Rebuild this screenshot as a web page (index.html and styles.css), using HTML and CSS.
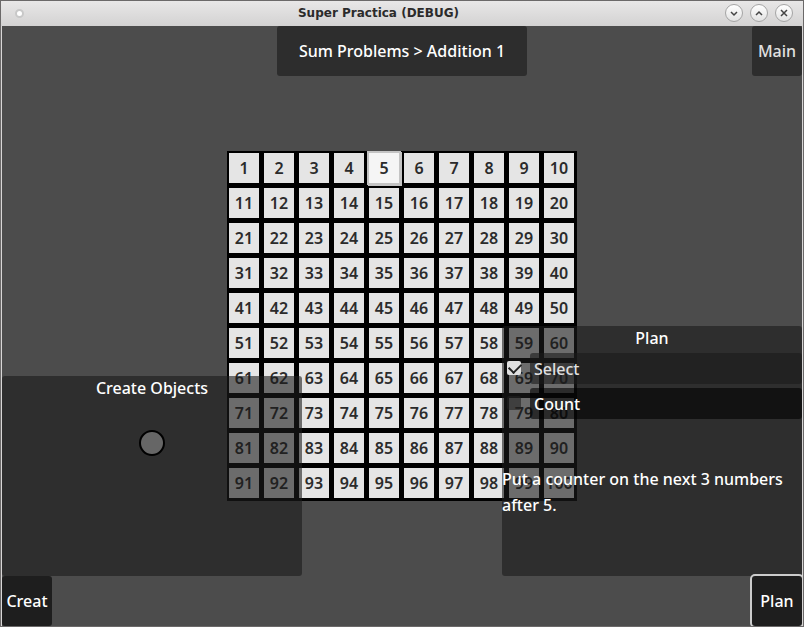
FILE: index.html
```html
<!DOCTYPE html>
<html lang="en">
<head>
<meta charset="utf-8">
<title>Super Practica (DEBUG)</title>
<link rel="stylesheet" href="styles.css">
</head>
<body>
<div class="window">
  <header class="titlebar">
    <span class="window-dot"></span>
    <h1 class="window-title">Super Practica (DEBUG)</h1>
    <div class="window-controls">
      <button class="window-button" aria-label="Minimize"><svg viewBox="0 0 16 16"><path d="M5 7l3 3 3-3"/></svg></button>
      <button class="window-button" aria-label="Maximize"><svg viewBox="0 0 16 16"><path d="M5 10l3-3 3 3"/></svg></button>
      <button class="window-button" aria-label="Close"><svg viewBox="0 0 16 16"><path d="M5 5l6 6M11 5l-6 6"/></svg></button>
    </div>
  </header>
  <main class="stage">
    <section class="board" id="board"></section>
    <nav class="topbar">
      <h2 class="level-title">Sum Problems &gt; Addition 1</h2>
      <button class="square-button main-button">Main</button>
    </nav>
    <section class="dock dock-left">
      <div class="panel create-panel">
        <h3 class="panel-title">Create Objects</h3>
        <button class="counter" aria-label="Counter"></button>
      </div>
      <button class="square-button">Creat</button>
    </section>
    <section class="dock dock-right">
      <div class="panel plan-panel">
        <h3 class="panel-title">Plan</h3>
        <ul class="tasks">
          <li class="task">
            <input class="check" type="checkbox" id="task-select" aria-labelledby="name-select" checked>
            <label class="task-name" id="name-select" for="task-select">Select</label>
          </li>
          <li class="task task-current">
            <input class="check" type="checkbox" id="task-count" aria-labelledby="name-count">
            <label class="task-name" id="name-count" for="task-count">Count</label>
          </li>
        </ul>
        <p class="instructions">Put a counter on the next 3 numbers after 5.</p>
      </div>
      <button class="square-button focused">Plan</button>
    </section>
  </main>
</div>
<script src="board.js"></script>
</body>
</html>
```
FILE: styles.css
```css
* {
  box-sizing: border-box;
}

body {
  margin: 0;
  font: 500 16px/22px "Noto Sans", sans-serif;
  color: #fff;
}

h1, h2, h3, p, ul {
  margin: 0;
  padding: 0;
  font: inherit;
}

button {
  margin: 0;
  padding: 0;
  border: 0;
  font: inherit;
  color: inherit;
}

.window {
  display: flex;
  flex-direction: column;
  height: 100vh;
  border: 1px solid #6b6969;
  background: #d8d6d6;
}

.titlebar {
  display: flex;
  align-items: center;
  flex: none;
  height: 25px;
  padding: 0 10px 1px 14px;
  background: linear-gradient(#e8e7e7, #d3d2d2);
}

.window-dot {
  width: 9px;
  height: 9px;
  border: 2px solid #c8c8c8;
  border-radius: 50%;
  background: #fff;
}

.window-title {
  flex: 1;
  padding-left: 8px;
  font: bold 12px/16px "DejaVu Sans", sans-serif;
  text-align: center;
  color: #2b2b2b;
}

.window-controls {
  display: flex;
  gap: 7px;
}

.window-button {
  width: 18px;
  height: 18px;
  border: 1px solid #a5a5a5;
  border-radius: 50%;
  background: linear-gradient(#fff, #e2e2e2);
}

.window-button svg {
  display: block;
  width: 16px;
  height: 16px;
  fill: none;
  stroke: #444;
  stroke-width: 1.5;
}

.stage {
  display: grid;
  flex: 1;
  min-height: 0;
  margin: 0 1px;
  overflow: hidden;
  background: #4c4c4c;
}

.stage > * {
  grid-area: 1 / 1;
}

.board {
  display: grid;
  grid-template-columns: repeat(10, 30px);
  gap: 5px;
  place-self: center;
  padding: 2px 3px 3px 2px;
  background: #000;
}

.cell {
  height: 30px;
  background: #e5e5e5;
  font-weight: 600;
  color: #2b2b2b;
}

.cell-active {
  background: #f5f5f5;
  box-shadow: 0 0 0 2px #c4c4c4, 1px 1px 0 2px #c4c4c4;
}

.topbar {
  display: grid;
  grid-template-columns: 1fr auto 1fr;
  align-self: start;
}

.level-title {
  grid-column: 2;
  padding: 14px 22px;
  border-radius: 3px;
  background: #2d2d2d;
}

.square-button {
  width: 50px;
  height: 50px;
  border-radius: 3px;
  background: #1e1e1e;
}

.main-button {
  justify-self: end;
  background: #2d2d2d;
  color: #e0e0e0;
}

.focused {
  box-shadow: 0 0 0 2px #ccc;
}

.dock {
  display: flex;
  flex-direction: column;
  align-self: end;
  width: 300px;
}

.dock-left {
  justify-self: start;
  align-items: flex-start;
}

.dock-right {
  justify-self: end;
  align-items: flex-end;
}

.panel {
  width: 100%;
  border-radius: 3px;
  background: rgba(26, 26, 26, 0.6);
}

.panel-title {
  text-align: center;
}

.create-panel {
  display: flex;
  flex-direction: column;
  align-items: center;
  gap: 31px;
  height: 200px;
}

.create-panel .panel-title {
  padding-top: 1px;
}

.counter {
  width: 26px;
  height: 26px;
  border: 2px solid #000;
  border-radius: 50%;
  background: #666;
}

.plan-panel {
  height: 250px;
}

.plan-panel .panel-title {
  padding: 1px 0 4px;
}

.tasks {
  display: grid;
  gap: 4px;
  list-style: none;
}

.task {
  display: flex;
  align-items: flex-start;
  gap: 9px;
  padding-left: 5px;
}

.task-name {
  flex: 1;
  padding: 5px 4px 4px;
  border-radius: 3px;
  background: rgba(26, 26, 26, 0.6);
  color: #e0e0e0;
}

.task-current .task-name {
  background: rgba(0, 0, 0, 0.6);
  color: #fff;
}

.check {
  appearance: none;
  width: 14px;
  height: 14px;
  margin: 8px 0 0;
  border-radius: 2px;
  background: rgba(34, 34, 34, 0.6);
}

.check:checked {
  background: #e0e0e0;
}

.check:checked::before {
  content: "";
  display: block;
  width: 10px;
  height: 6px;
  margin: 2px;
  border: solid #222;
  border-width: 0 0 2px 2px;
  transform: rotate(-45deg);
}

.instructions {
  padding-top: 47px;
  line-height: 26px;
}
```
FILE: board.js
```js
const board = document.getElementById("board");

for (let n = 1; n <= 100; n++) {
  const cell = document.createElement("button");
  cell.className = n === 5 ? "cell cell-active" : "cell";
  cell.textContent = n;
  board.append(cell);
}
```
